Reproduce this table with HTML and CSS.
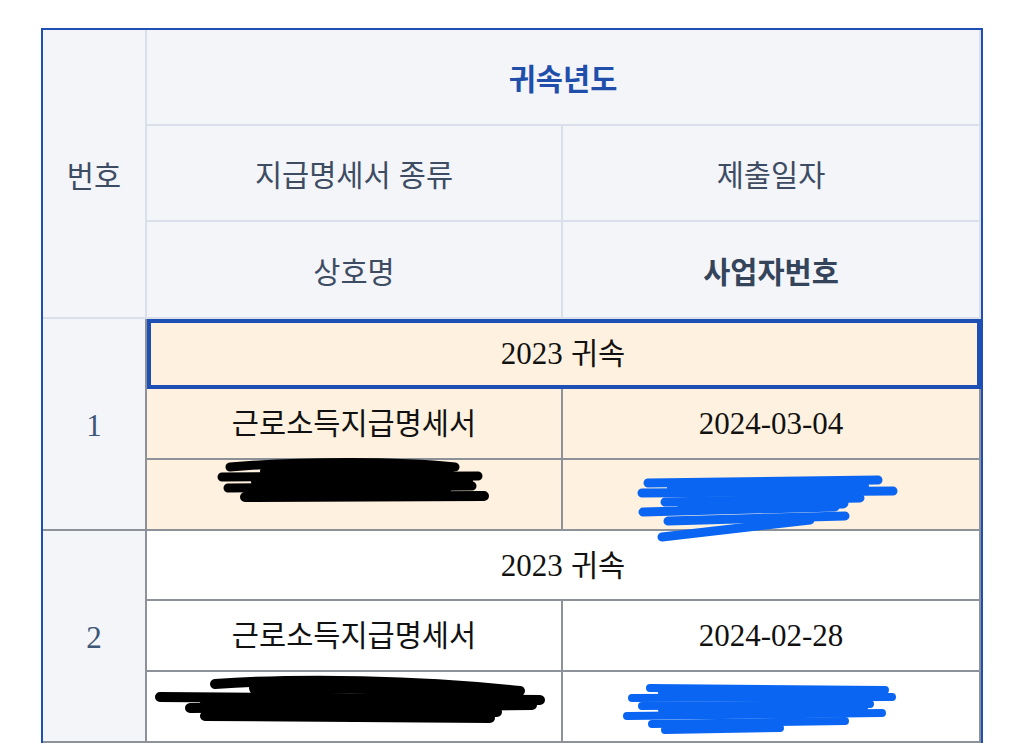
FILE: index.html
```html
<!DOCTYPE html>
<html lang="ko">
<head>
<meta charset="utf-8">
<title>지급명세서</title>
<link rel="stylesheet" href="styles.css">
</head>
<body>
<table class="grid">
  <colgroup>
    <col class="c-no">
    <col class="c-a">
    <col class="c-b">
  </colgroup>
  <thead>
    <tr class="h-row">
      <th class="h no" rowspan="3">번호</th>
      <th class="h year" colspan="2">귀속년도</th>
    </tr>
    <tr class="h-row">
      <th class="h">지급명세서 종류</th>
      <th class="h">제출일자</th>
    </tr>
    <tr class="h-row h-last">
      <th class="h">상호명</th>
      <th class="h strong">사업자번호</th>
    </tr>
  </thead>
  <tbody class="rec selected">
    <tr class="g-row">
      <td class="idx" rowspan="3">1</td>
      <td class="cell group focus" colspan="2"><span class="num">2023</span> 귀속</td>
    </tr>
    <tr class="d-row">
      <td class="cell">근로소득지급명세서</td>
      <td class="cell"><span class="num">2024-03-04</span></td>
    </tr>
    <tr class="d-row">
      <td class="mask">
        <svg class="scrib" width="414" height="67" viewBox="0 0 414 67">
          <g fill="none" stroke="#000" stroke-linecap="round" stroke-linejoin="round">
            <path stroke-width="9" d="M83,7 C153,1 253,1 308,7"/>
            <path stroke-width="14" d="M120,12 C200,8 260,9 300,13"/>
            <path stroke-width="9" d="M75,17 L331,16"/>
            <path stroke-width="12" d="M110,22 L320,21"/>
            <path stroke-width="9" d="M81,28 L325,26"/>
            <path stroke-width="10" d="M98,37 L337,36"/>
            <path stroke-width="8" d="M112,32 L300,31"/>
          </g>
        </svg>
      </td>
      <td class="mask">
        <svg class="scrib" width="418" height="90" viewBox="0 0 418 90">
          <g fill="none" stroke="#0a66f2" stroke-linecap="round" stroke-linejoin="round" stroke-width="9">
            <path d="M85,23 L315,20"/>
            <path d="M79,33 L330,31"/>
            <path stroke-width="12" d="M110,28 L300,26"/>
            <path d="M102,42 L297,38"/>
            <path stroke-width="11" d="M120,46 L280,43"/>
            <path d="M80,52 L272,47"/>
            <path d="M105,61 L282,56"/>
            <path d="M99,77 L247,60"/>
          </g>
        </svg>
      </td>
    </tr>
  </tbody>
  <tbody class="rec">
    <tr class="g-row">
      <td class="idx" rowspan="3">2</td>
      <td class="cell group" colspan="2"><span class="num">2023</span> 귀속</td>
    </tr>
    <tr class="d-row">
      <td class="cell">근로소득지급명세서</td>
      <td class="cell"><span class="num">2024-02-28</span></td>
    </tr>
    <tr class="d-row">
      <td class="mask">
        <svg class="scrib" width="414" height="70" viewBox="0 0 414 70">
          <g fill="none" stroke="#000" stroke-linecap="round" stroke-linejoin="round">
            <path stroke-width="10" d="M68,12 C153,6 273,8 373,19"/>
            <path stroke-width="16" d="M110,16 C200,12 290,14 360,22"/>
            <path stroke-width="10" d="M13,25 L393,28"/>
            <path stroke-width="14" d="M60,30 L370,30"/>
            <path stroke-width="10" d="M43,36 L385,33"/>
            <path stroke-width="10" d="M58,44 L343,46"/>
            <path stroke-width="10" d="M70,40 L350,40"/>
          </g>
        </svg>
      </td>
      <td class="mask">
        <svg class="scrib" width="418" height="70" viewBox="0 0 418 70">
          <g fill="none" stroke="#0a66f2" stroke-linecap="round" stroke-linejoin="round" stroke-width="8">
            <path d="M87,16 L322,18"/>
            <path d="M69,26 L329,25"/>
            <path stroke-width="10" d="M100,21 L300,22"/>
            <path d="M79,34 L307,32"/>
            <path stroke-width="10" d="M100,38 L300,37"/>
            <path d="M64,44 L319,41"/>
            <path d="M89,52 L282,49"/>
            <path d="M102,58 L217,56"/>
          </g>
        </svg>
      </td>
    </tr>
  </tbody>
</table>
</body>
</html>
```

FILE: styles.css
```css
html, body {
  margin: 0;
  padding: 0;
  background: #ffffff;
  overflow: hidden;
}

body {
  padding: 28px 0 0 41px;
  height: 743px;
  box-sizing: border-box;
}

.grid {
  border-collapse: separate;
  border-spacing: 0;
  width: 942px;
  table-layout: fixed;
  border-top: 2px solid #1d4fb5;
  border-left: 2px solid #1d4fb5;
  border-right: 2px solid #1d4fb5;
  font-family: "Noto Sans CJK KR", "Noto Sans", sans-serif;
  font-size: 29.5px;
}

.c-no { width: 104px; }
.c-a { width: 416px; }
.c-b { width: 418px; }

.grid th,
.grid td {
  padding: 0;
  text-align: center;
  vertical-align: middle;
  border-right: 2px solid #8d9199;
  border-bottom: 2px solid #8d9199;
  box-sizing: border-box;
}

.h-row { height: 96px; }
.h-row.h-last { height: 97px; }

.grid th.h {
  background: #f3f5f9;
  color: #3d4c63;
  font-weight: 400;
  border-right-color: #d9e0e9;
  border-bottom-color: #d9e0e9;
}

.grid th.year {
  color: #1f4fab;
  font-weight: 700;
}

.grid th.strong {
  color: #34445b;
  font-weight: 700;
}

.g-row { height: 70px; }
.d-row { height: 71px; }

.grid td {
  color: #111111;
  background: #ffffff;
}

.grid td.cell {
  padding-bottom: 5px;
}

.selected td {
  background: #fff1df;
}

.grid td.idx {
  background: #f3f5f9;
  color: #3e5676;
  font-family: "Liberation Serif", serif;
  font-size: 31px;
  padding-top: 4px;
}

.num {
  font-family: "Liberation Serif", serif;
  font-size: 31px;
}

.grid td.focus {
  outline: 4px solid #1d4fb5;
  outline-offset: -4px;
}

.grid td.mask {
  position: relative;
}

.scrib {
  position: absolute;
  left: 0;
  top: 0;
  overflow: visible;
  z-index: 2;
}
```
